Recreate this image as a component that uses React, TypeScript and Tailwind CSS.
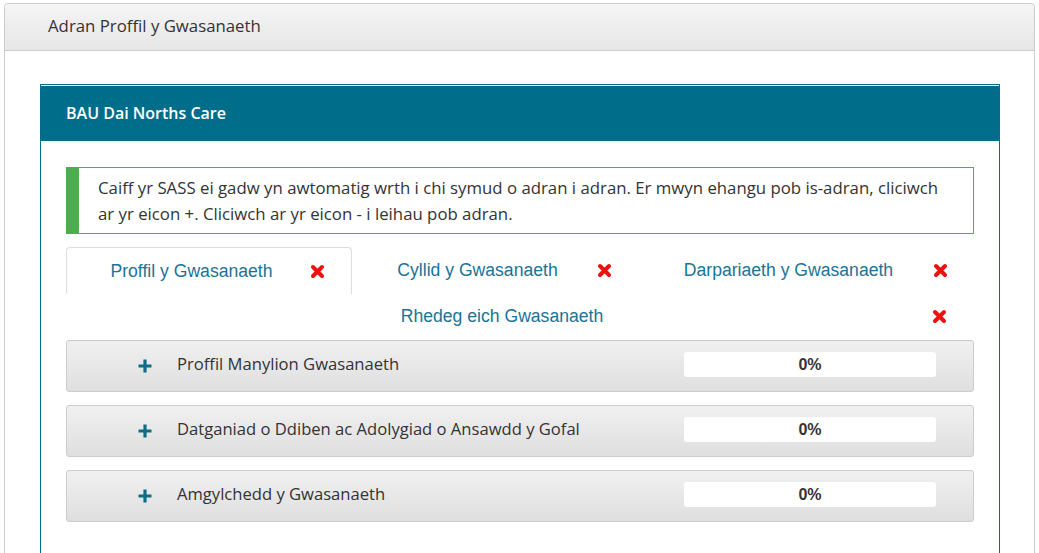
import React from 'react'

const humanist = { fontFamily: '"Open Sans", Lato, sans-serif', fontVariantLigatures: 'none' as const }
const arial = { fontFamily: '"Liberation Sans", Arial, sans-serif' }

function RedX() {
  return (
    <svg width="15" height="15" viewBox="0 0 15 15" className="shrink-0">
      <path d="M3 3 L12 12 M12 3 L3 12" stroke="#ee1111" strokeWidth="4" strokeLinecap="round" />
    </svg>
  )
}

function Plus() {
  return (
    <svg width="14" height="14" viewBox="0 0 14 14" className="shrink-0">
      <path d="M7 0.5 V13.5 M0.5 7 H13.5" stroke="#106c84" strokeWidth="3.2" />
    </svg>
  )
}

const tabs = [
  { label: 'Proffil y Gwasanaeth', width: 'w-[286px]', active: true },
  { label: 'Cyllid y Gwasanaeth', width: 'w-[286px]', active: false },
  { label: 'Darpariaeth y Gwasanaeth', width: 'flex-1', active: false },
]

const sections = ['Proffil Manylion Gwasanaeth', 'Datganiad o Ddiben ac Adolygiad o Ansawdd y Gofal', 'Amgylchedd y Gwasanaeth']

export default function App() {
  return (
    <div className="bg-white pl-[4px] pr-[4px] pt-[3px] overflow-hidden h-[553px]">
      <div className="border border-[#cccccc] rounded-t-[4px] min-h-[600px]" style={humanist}>
        <div className="h-[47px] flex items-center pl-[43px] pb-[2px] bg-linear-to-b from-[#f5f5f5] to-[#e6e6e6] border-b border-[#cccccc] rounded-t-[4px] text-[16.8px] text-[#333333]">
          Adran Proffil y Gwasanaeth
        </div>
        <div className="pl-[35px] pr-[34px] pt-[33px]">
          <div className="border border-[#006e8a] min-h-[500px]">
            <div className="border-t border-white bg-[#006e8a] h-[56px] flex items-center pl-[25px] pb-[1px] text-white text-[16px] font-semibold">
              BAU Dai Norths Care
            </div>
            <div className="px-[25px] pt-[26px]">
              <div className="flex border border-[#4cae4c] h-[67px]">
                <div className="w-[12px] bg-[#4cae4c] shrink-0" />
                <div className="pl-[19px] pr-[19px] pt-[7px] text-[16.8px] leading-[26px] text-[#333333]">
                  Caiff yr SASS ei gadw yn awtomatig wrth i chi symud o adran i adran. Er mwyn ehangu pob is-adran, cliciwch ar yr eicon +. Cliciwch ar yr eicon - i leihau pob adran.
                </div>
              </div>

              <div className="mt-[13px] text-[17.6px] text-[#1a7396]" style={arial}>
                <div className="flex h-[47px]">
                  {tabs.map((t) => (
                    <div
                      key={t.label}
                      className={`${t.width} flex items-center pl-[6px] pr-[26px] ${t.active ? 'border border-b-0 border-[#dddddd] rounded-t-[4px]' : ''}`}
                    >
                      <span className="flex-1 text-center">{t.label}</span>
                      <RedX />
                    </div>
                  ))}
                </div>
                <div className="flex items-center h-[44px] pl-[6px] pr-[27px]">
                  <span className="flex-1 text-center">Rhedeg eich Gwasanaeth</span>
                  <RedX />
                </div>
              </div>

              <div className="mt-[2px] flex flex-col gap-[13px]">
                {sections.map((s) => (
                  <div
                    key={s}
                    className="h-[52px] flex items-center border border-[#cccccc] rounded-[3px] bg-linear-to-b from-[#f0f0f0] to-[#dfdfdf] pl-[71px] pr-[37px]"
                  >
                    <Plus />
                    <span className="ml-[25px] pb-[3px] flex-1 text-[16.6px] text-[#333333]">{s}</span>
                    <div
                      className="w-[252px] h-[25px] mb-[3px] bg-white rounded-[3px] flex items-center justify-center text-[16px] font-bold text-[#333333]"
                      style={arial}
                    >
                      0%
                    </div>
                  </div>
                ))}
              </div>
            </div>
          </div>
        </div>
      </div>
    </div>
  )
}
